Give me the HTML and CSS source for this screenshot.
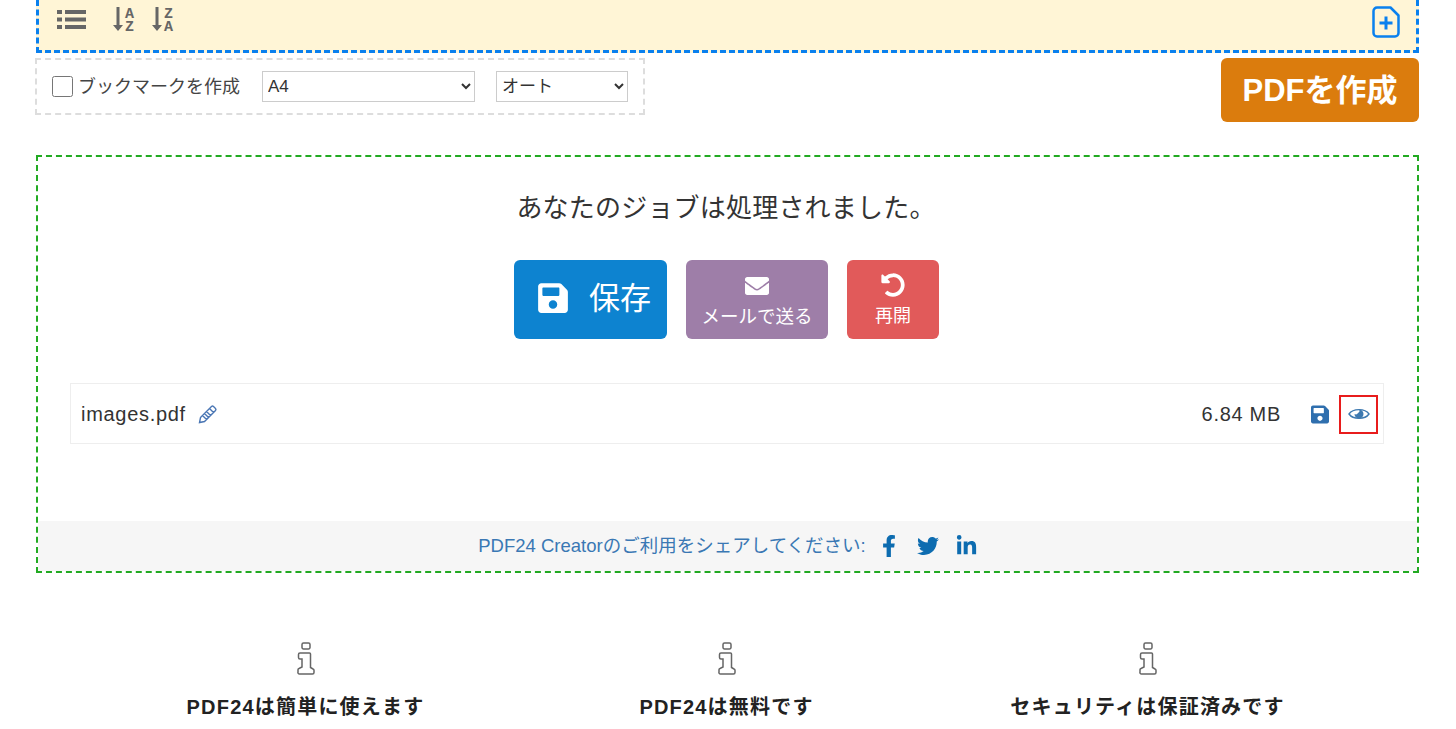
FILE: index.html
```html
<!DOCTYPE html>
<html lang="ja">
<head>
    <meta charset="UTF-8">
    <title>PDF24</title>
    <link rel="stylesheet" href="styles.css">
</head>
<body>
    <div class="page">
        <div class="file-zone">
            <div class="tools">
                <svg class="tool-list" viewBox="0 0 29 21"><path d="M0 1h5v4H0zM8 1h21v4H8zM0 8.500h5v4H0zM8 8.500h21v4H8zM0 16h5v4H0zM8 16h21v4H8z"/></svg>
                <span class="sort">
                    <svg viewBox="0 0 10 24"><path d="M3.500 0h3v18H10l-5 6-5-6h3.500z"/></svg>
                    <span class="sort-letters">A Z</span>
                </span>
                <span class="sort">
                    <svg viewBox="0 0 10 24"><path d="M3.500 0h3v18H10l-5 6-5-6h3.500z"/></svg>
                    <span class="sort-letters">Z A</span>
                </span>
            </div>
            <svg class="add-file" viewBox="0 0 28 32"><path class="add-file-outline" d="M5 1.500h13.500l8 8V27a3.500 3.500 0 0 1-3.500 3.500H5A3.500 3.500 0 0 1 1.500 27V5A3.500 3.500 0 0 1 5 1.500z"/><path class="add-file-plus" d="M14 10.500v13M7.500 17h13"/></svg>
        </div>

        <div class="options-row">
            <div class="options">
                <label class="bookmark"><input type="checkbox"><span>ブックマークを作成</span></label>
                <select class="select-size"><option>A4</option></select>
                <select class="select-orient"><option>オート</option></select>
            </div>
            <button class="create-btn">PDFを作成</button>
        </div>

        <div class="result">
            <h2 class="result-title">あなたのジョブは処理されました。</h2>
            <div class="actions">
                <button class="btn btn-save">
                    <svg viewBox="0 0 448 512"><path d="M433.941 129.941l-83.882-83.882A48 48 0 0 0 316.118 32H48C21.49 32 0 53.49 0 80v352c0 26.51 21.49 48 48 48h352c26.51 0 48-21.49 48-48V163.882a48 48 0 0 0-14.059-33.941zM224 416c-35.346 0-64-28.654-64-64 0-35.346 28.654-64 64-64s64 28.654 64 64c0 35.346-28.654 64-64 64zm96-304.520V212c0 6.627-5.373 12-12 12H76c-6.627 0-12-5.373-12-12V108c0-6.627 5.373-12 12-12h228.520c3.183 0 6.235 1.264 8.485 3.515l3.480 3.480A11.996 11.996 0 0 1 320 111.480z"/></svg>
                    <span>保存</span>
                </button>
                <button class="btn btn-mail">
                    <svg viewBox="0 0 512 512"><path d="M502.300 190.800c3.900-3.100 9.700-.2 9.700 4.700V400c0 26.500-21.500 48-48 48H48c-26.500 0-48-21.500-48-48V195.600c0-5 5.700-7.800 9.700-4.700 22.400 17.400 52.100 39.500 154.100 113.600 21.100 15.400 56.700 47.800 92.200 47.600 35.700.3 72-32.800 92.300-47.600 102-74.100 131.600-96.300 154-113.700zM256 320c23.200.4 56.600-29.200 73.400-41.400 132.700-96.300 142.800-104.700 173.400-128.700 5.800-4.500 9.200-11.500 9.200-18.900v-19c0-26.500-21.500-48-48-48H48C21.500 64 0 85.500 0 112v19c0 7.400 3.400 14.300 9.200 18.900 30.600 23.900 40.700 32.400 173.400 128.700 16.800 12.200 50.200 41.800 73.400 41.400z"/></svg>
                    <span>メールで送る</span>
                </button>
                <button class="btn btn-restart">
                    <svg viewBox="0 0 512 512"><path d="M255.545 8c-66.269.119-126.438 26.233-170.860 68.685L48.971 40.971C33.851 25.851 8 36.559 8 57.941V192c0 13.255 10.745 24 24 24h134.059c21.382 0 32.090-25.851 16.971-40.971l-41.750-41.750c30.864-28.899 70.801-44.907 113.230-45.273 92.398-.798 170.283 73.977 169.484 169.442C423.236 348.009 349.816 424 256 424c-41.127 0-79.997-14.678-110.630-41.556-4.743-4.161-11.906-3.908-16.368.553L89.340 422.659c-4.872 4.872-4.631 12.815.482 17.433C133.798 479.813 192.074 504 256 504c136.966 0 247.999-111.033 248-247.998C504.001 119.193 392.354 7.755 255.545 8z"/></svg>
                    <span>再開</span>
                </button>
            </div>

            <div class="file-row">
                <span class="file-name">images.pdf</span>
                <svg class="edit-icon" viewBox="0 0 20 20"><path d="M2.500 13.500L13.500 2.500a1.500 1.500 0 0 1 2 0l2 2a1.500 1.500 0 0 1 0 2L6.500 17.500 1.500 18.500zM11.500 4.500l4 4M4.500 11.500l4 4M6.500 9.500l4 4M8.500 7.500l4 4"/></svg>
                <span class="file-size">6.84 MB</span>
                <span class="file-btn">
                    <svg class="save-small" viewBox="0 0 448 512"><path d="M433.941 129.941l-83.882-83.882A48 48 0 0 0 316.118 32H48C21.49 32 0 53.49 0 80v352c0 26.51 21.49 48 48 48h352c26.51 0 48-21.49 48-48V163.882a48 48 0 0 0-14.059-33.941zM224 416c-35.346 0-64-28.654-64-64 0-35.346 28.654-64 64-64s64 28.654 64 64c0 35.346-28.654 64-64 64zm96-304.520V212c0 6.627-5.373 12-12 12H76c-6.627 0-12-5.373-12-12V108c0-6.627 5.373-12 12-12h228.520c3.183 0 6.235 1.264 8.485 3.515l3.480 3.480A11.996 11.996 0 0 1 320 111.480z"/></svg>
                </span>
                <span class="file-btn file-btn-active">
                    <svg class="eye-small" viewBox="0 0 22 14"><path class="eye-outline" d="M1 7C5 1.200 17 1.200 21 7 17 12.800 5 12.800 1 7z"/><path d="M11 2.500a4.500 4.500 0 1 1-4.500 4.500 2.500 2.500 0 0 0 3.500-1 2.500 2.500 0 0 0 1-3.500z"/></svg>
                </span>
            </div>

            <div class="share">
                <span class="share-text">PDF24 Creatorのご利用をシェアしてください:</span>
                <svg class="share-fb" viewBox="0 0 320 512"><path d="M279.140 288l14.220-92.660h-88.910v-60.130c0-25.350 12.420-50.060 52.240-50.060h40.420V6.260S260.430 0 225.360 0c-73.220 0-121.080 44.380-121.080 124.720v70.620H22.890V288h81.390v224h100.170V288z"/></svg>
                <svg class="share-tw" viewBox="0 0 512 512"><path d="M459.370 151.716c.325 4.548.325 9.097.325 13.645 0 138.720-105.583 298.558-298.558 298.558-59.452 0-114.680-17.219-161.137-47.106 8.447.974 16.568 1.299 25.340 1.299 49.055 0 94.213-16.568 130.274-44.832-46.132-.975-84.792-31.188-98.112-72.772 6.498.974 12.995 1.624 19.818 1.624 9.421 0 18.843-1.300 27.614-3.573-48.081-9.747-84.143-51.980-84.143-102.985v-1.299c13.969 7.797 30.214 12.670 47.431 13.319-28.264-18.843-46.781-51.005-46.781-87.391 0-19.492 5.197-37.360 14.294-52.954 51.655 63.675 129.300 105.258 216.365 109.807-1.624-7.797-2.599-15.918-2.599-24.040 0-57.828 46.782-104.934 104.934-104.934 30.213 0 57.502 12.670 76.670 33.137 23.715-4.548 46.456-13.320 66.599-25.340-7.798 24.366-24.366 44.833-46.132 57.827 21.117-2.273 41.584-8.122 60.426-16.243-14.292 20.791-32.161 39.308-52.628 54.253z"/></svg>
                <svg class="share-in" viewBox="0 0 448 512"><path d="M100.280 448H7.400V148.900h92.880zM53.790 108.100C24.090 108.100 0 83.500 0 53.800a53.790 53.790 0 0 1 107.580 0c0 29.700-24.100 54.300-53.790 54.300zM447.900 448h-92.680V302.400c0-34.700-.7-79.200-48.290-79.200-48.290 0-55.690 37.700-55.690 76.700V448h-92.780V148.900h89.080v40.800h1.300c12.400-23.500 42.690-48.300 87.880-48.300 94 0 111.280 61.900 111.280 142.300V448z"/></svg>
            </div>
        </div>

        <div class="features">
            <div class="feature">
                <svg class="info-icon" viewBox="0 0 18 33"><path d="M6.500 1h5a1.500 1.500 0 0 1 1.500 1.500v3a1.500 1.500 0 0 1-1.500 1.500h-5A1.500 1.500 0 0 1 5 5.500v-3A1.500 1.500 0 0 1 6.500 1zM3 11h9.500a1 1 0 0 1 1 1v13.500l2.500 1.500a1.500 1.500 0 0 1 1 1.500v2a1.500 1.500 0 0 1-1.500 1.500h-13A1.500 1.500 0 0 1 1 30v-2a1.500 1.500 0 0 1 1-1.500l3-1.500V17H3a1.500 1.500 0 0 1-1.500-1.500v-3A1.500 1.500 0 0 1 3 11z"/></svg>
                <h3>PDF24は簡単に使えます</h3>
            </div>
            <div class="feature">
                <svg class="info-icon" viewBox="0 0 18 33"><path d="M6.500 1h5a1.500 1.500 0 0 1 1.500 1.500v3a1.500 1.500 0 0 1-1.500 1.500h-5A1.500 1.500 0 0 1 5 5.500v-3A1.500 1.500 0 0 1 6.500 1zM3 11h9.500a1 1 0 0 1 1 1v13.500l2.500 1.500a1.500 1.500 0 0 1 1 1.500v2a1.500 1.500 0 0 1-1.500 1.500h-13A1.500 1.500 0 0 1 1 30v-2a1.500 1.500 0 0 1 1-1.500l3-1.500V17H3a1.500 1.500 0 0 1-1.500-1.500v-3A1.500 1.500 0 0 1 3 11z"/></svg>
                <h3>PDF24は無料です</h3>
            </div>
            <div class="feature">
                <svg class="info-icon" viewBox="0 0 18 33"><path d="M6.500 1h5a1.500 1.500 0 0 1 1.500 1.500v3a1.500 1.500 0 0 1-1.500 1.500h-5A1.500 1.500 0 0 1 5 5.500v-3A1.500 1.500 0 0 1 6.500 1zM3 11h9.500a1 1 0 0 1 1 1v13.500l2.500 1.500a1.500 1.500 0 0 1 1 1.500v2a1.500 1.500 0 0 1-1.500 1.500h-13A1.500 1.500 0 0 1 1 30v-2a1.500 1.500 0 0 1 1-1.500l3-1.500V17H3a1.500 1.500 0 0 1-1.500-1.500v-3A1.500 1.500 0 0 1 3 11z"/></svg>
                <h3>セキュリティは保証済みです</h3>
            </div>
        </div>
    </div>
</body>
</html>
```

FILE: styles.css
```css
html, body {
    height: 100%;
    overflow: hidden;
}

body {
    margin: 0;
    background-color: #fff;
    color: #333;
    font-family: "Liberation Sans", "Noto Sans CJK JP", sans-serif;
}

svg {
    display: block;
    fill: currentColor;
}

.page {
    margin: 0 37px 0 36px;
}

.file-zone {
    height: 50px;
    background-color: #fff5d6;
    border: 3px dashed #0a80ee;
    border-top: none;
    display: flex;
    justify-content: space-between;
    align-items: flex-start;
    padding: 0 18px;
}

.tools {
    display: flex;
    align-items: flex-start;
    color: #666;
    padding-top: 9px;
}

.tool-list {
    width: 29px;
    height: 21px;
    margin-right: 27px;
}

.sort {
    display: flex;
    margin-right: 18px;
    width: 21px;
}

.sort svg {
    width: 10px;
    height: 24px;
    margin-top: -2px;
    flex-shrink: 0;
}

.sort-letters {
    width: min-content;
    margin-left: 2px;
    margin-top: -1px;
    font-family: "Liberation Mono", monospace;
    font-size: 15px;
    font-weight: bold;
    line-height: 13px;
}

.add-file {
    width: 28px;
    height: 32px;
    margin: 6px -2px 0 0;
}

.add-file-outline,
.add-file-plus {
    fill: none;
    stroke: #0a80ee;
    stroke-width: 2.500;
    stroke-linejoin: round;
}

.add-file-plus {
    stroke-width: 3;
}

/* options */
.options-row {
    display: flex;
    justify-content: space-between;
    align-items: flex-start;
    margin-top: 5px;
}

.options {
    height: 53px;
    margin-left: -1px;
    border: 2px dashed #ddd;
    display: flex;
    align-items: center;
    padding-left: 15px;
    width: 591px;
}

.bookmark {
    display: flex;
    align-items: center;
    width: 210px;
    font-size: 18px;
    color: #444;
}

.bookmark span {
    margin-top: -3px;
}

.bookmark input {
    width: 21px;
    height: 21px;
    margin: 0 5px 0 0;
}

.options select {
    height: 31px;
    background-color: #fff;
    border: 1px solid #ccc;
    border-radius: 0;
    color: #333;
    font-family: inherit;
    font-size: 17px;
    padding-left: 1px;
}

.select-size {
    width: 213px;
    margin-right: 21px;
}

.select-orient {
    width: 132px;
}

.create-btn {
    width: 198px;
    height: 64px;
    border: none;
    border-radius: 6px;
    background-color: #db7c0d;
    color: #fff;
    font-family: inherit;
    font-size: 31px;
    font-weight: bold;
    padding: 0 0 6px;
}

/* result */
.result {
    margin-top: 33px;
    height: 414px;
    border: 2px dashed #22aa22;
    display: flex;
    flex-direction: column;
    align-items: center;
}

.result-title {
    margin: 31px 3px 0 0;
    font-size: 26px;
    letter-spacing: .2px;
    line-height: 40px;
    font-weight: normal;
}

.actions {
    display: flex;
    gap: 19px;
    margin: 32px 2px 0 0;
}

.btn {
    height: 79px;
    border: none;
    border-radius: 6px;
    color: #fff;
    font-family: inherit;
    display: flex;
    flex-direction: column;
    align-items: center;
    justify-content: center;
    padding: 0;
}

.btn-save {
    width: 153px;
    flex-direction: row;
    gap: 21px;
    background-color: #0d83d0;
    font-size: 31px;
    padding: 0 0 4px 8px;
}

.btn-save svg {
    width: 30px;
    height: 34px;
}

.btn-save span {
    margin-top: -4px;
}

.btn-mail {
    width: 142px;
    background-color: #9e7ea8;
    font-size: 18.500px;
    line-height: 26px;
    padding-top: 4px;
}

.btn-mail svg {
    width: 24px;
    height: 24px;
    margin-bottom: 6px;
}

.btn-restart {
    width: 92px;
    background-color: #e15a5a;
    font-size: 18px;
    line-height: 26px;
    padding-top: 3px;
}

.btn-restart svg {
    width: 24px;
    height: 24px;
    margin-bottom: 6px;
}

.file-row {
    align-self: stretch;
    height: 59px;
    margin: 44px 33px 0 32px;
    border: 1px solid #eee;
    display: flex;
    align-items: center;
    padding: 1px 0 0 10px;
    font-size: 20px;
    letter-spacing: .7px;
}

.file-name {
    margin-right: 12px;
}

.edit-icon {
    width: 20px;
    height: 20px;
    fill: none;
    stroke: #4a76b4;
    stroke-width: 1.400;
}

.file-size {
    margin-left: auto;
    margin-right: 19px;
}

.file-btn {
    width: 39px;
    height: 39px;
    box-sizing: border-box;
    display: flex;
    align-items: center;
    justify-content: center;
    color: #2f6fae;
}

.file-btn-active {
    margin-right: 5px;
    border: 2px solid #e81c1c;
    color: #3d79b0;
}

.save-small {
    width: 18px;
    height: 21px;
}

.eye-small {
    width: 22px;
    height: 14px;
}

.eye-outline {
    fill: none;
    stroke: currentColor;
    stroke-width: 1.400;
}

.share {
    align-self: stretch;
    margin-top: 77px;
    height: 50px;
    background-color: #f6f6f6;
    display: flex;
    align-items: center;
    justify-content: center;
    color: #0d6cb0;
    font-size: 18.500px;
}

.share-text {
    color: #3a78b4;
    margin-right: 16px;
    margin-top: -5px;
}

.share-fb {
    width: 14px;
    height: 22px;
    margin-right: 21px;
}

.share-tw {
    width: 22px;
    height: 22px;
    margin-right: 17px;
}

.share-in {
    width: 21px;
    height: 22px;
}

/* features */
.features {
    display: grid;
    grid-template-columns: repeat(3, 421px);
    justify-content: center;
    margin: 69px 0 0 -2px;
}

.feature {
    display: flex;
    flex-direction: column;
    align-items: center;
}

.info-icon {
    width: 18px;
    height: 33px;
    fill: none;
    stroke: #666;
    stroke-width: 1.500;
}

.feature h3 {
    margin: 19px 0 0;
    font-size: 20px;
    letter-spacing: 1.200px;
    line-height: 26px;
    color: #222;
}
```
